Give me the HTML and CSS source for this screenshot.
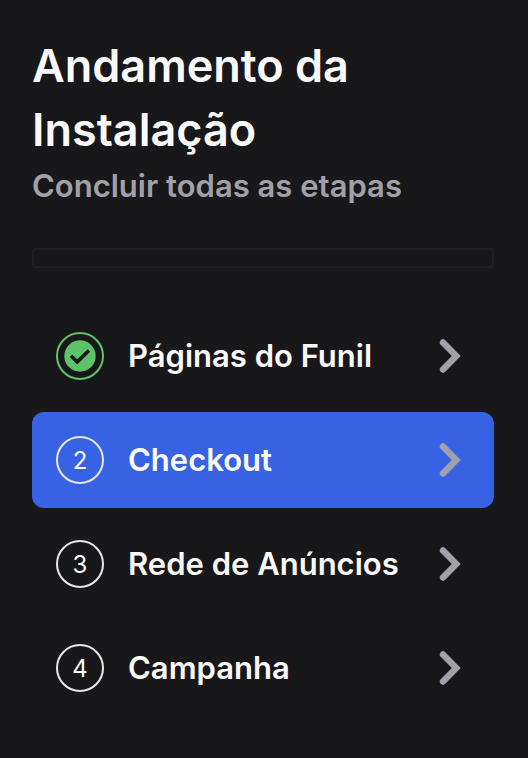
FILE: index.html
```html
<!DOCTYPE html>
<html lang="pt-BR">
<head>
<meta charset="utf-8">
<meta name="viewport" content="width=device-width, initial-scale=1">
<title>Andamento da Instalação</title>
<link rel="stylesheet" href="styles.css">
</head>
<body>
<main class="setup">
  <header class="setup-header">
    <h1 class="title">Andamento da Instalação</h1>
    <p class="subtitle">Concluir todas as etapas</p>
  </header>
  <div class="progress" role="progressbar" aria-label="Andamento" aria-valuemin="0" aria-valuemax="100" aria-valuenow="0"></div>
  <nav class="steps">
    <a class="step" href="#paginas">
      <span class="badge badge-done"><svg class="check" viewBox="0 0 32 32"><circle cx="16" cy="16" r="15.700"/><path d="M7 15.700l6.200 6.200 11.800-11.400"/></svg></span>
      <span class="label">Páginas do Funil</span>
      <svg class="chevron" viewBox="0 0 24 36"><path d="M5 4.500L18.300 18 5 31.500"/></svg>
    </a>
    <a class="step step-active" href="#checkout" aria-current="step">
      <span class="badge">2</span>
      <span class="label">Checkout</span>
      <svg class="chevron" viewBox="0 0 24 36"><path d="M5 4.500L18.300 18 5 31.500"/></svg>
    </a>
    <a class="step" href="#anuncios">
      <span class="badge">3</span>
      <span class="label">Rede de Anúncios</span>
      <svg class="chevron" viewBox="0 0 24 36"><path d="M5 4.500L18.300 18 5 31.500"/></svg>
    </a>
    <a class="step" href="#campanha">
      <span class="badge">4</span>
      <span class="label">Campanha</span>
      <svg class="chevron" viewBox="0 0 24 36"><path d="M5 4.500L18.300 18 5 31.500"/></svg>
    </a>
  </nav>
</main>
</body>
</html>
```
FILE: styles.css
```css
* { box-sizing: border-box; }
body {
  margin: 0;
  min-height: 100vh;
  background: #18181a;
  color: #fafafa;
  font-family: Inter, sans-serif;
}
.setup { padding: 34px 34px 42px 32px; }
.title { margin: 0; font-size: 45px; line-height: 64px; font-weight: 600; }
.subtitle { margin: 0; font-size: 31px; line-height: 48px; font-weight: 600; color: #a1a1aa; }
.progress { height: 20px; margin: 38px 0 40px; border: 2px solid #202022; border-radius: 4px; }
.steps { display: flex; flex-direction: column; gap: 8px; }
.step {
  display: flex;
  align-items: center;
  gap: 24px;
  padding: 24px 32px 24px 24px;
  border-radius: 12px;
  color: inherit;
  text-decoration: none;
}
.step-active { background: #3862e4; }
.badge {
  display: flex;
  flex: none;
  align-items: center;
  justify-content: center;
  width: 48px;
  height: 48px;
  border: 2px solid #e8e8ea;
  border-radius: 50%;
  font-size: 24px;
}
.badge-done { border-color: #5dc269; }
.check { width: 32px; height: 32px; fill: #5dc269; }
.check path { fill: none; stroke: #18181a; stroke-width: 3.6; }
.label { flex: 1; font-size: 31px; line-height: 48px; font-weight: 600; }
.chevron { flex: none; width: 24px; height: 36px; fill: none; stroke: #a1a1aa; stroke-width: 6.4; stroke-linecap: round; stroke-linejoin: miter; }
```
